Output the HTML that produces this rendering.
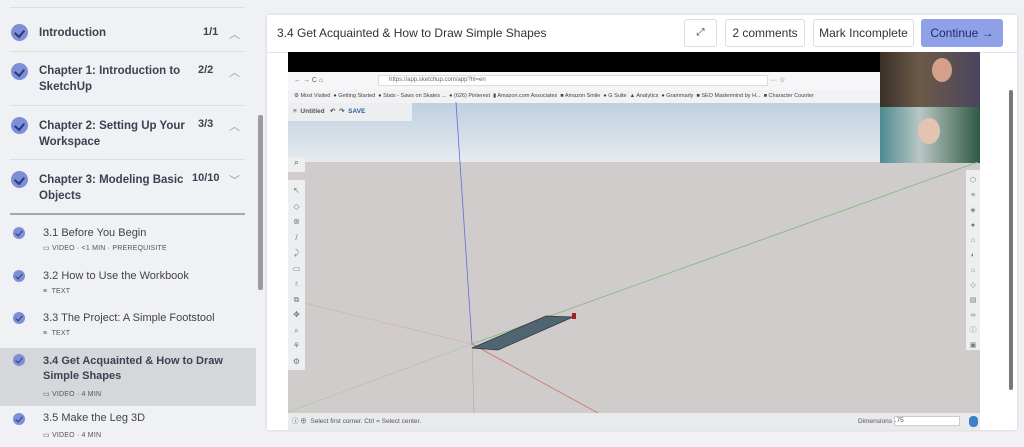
<!DOCTYPE html>
<html><head><meta charset="utf-8"><style>
*{margin:0;padding:0;box-sizing:border-box}
body{width:1024px;height:447px;overflow:hidden;background:#eff1f4;font-family:"Liberation Sans",sans-serif;position:relative;color:#3a3d45}
.abs{position:absolute}
.sec{position:absolute;left:10px;width:235px;border-top:1px solid #dcdee2}
.chk{position:absolute;width:17px;height:17px;border-radius:50%;background:#7e8fd8}
.chk:after{content:"";position:absolute;left:5px;top:4px;width:5px;height:7px;border:solid #2c3a7a;border-width:0 2px 2px 0;transform:rotate(40deg)}
.schk{position:absolute;width:12px;height:12px;border-radius:50%;background:#7e8fd8}
.schk:after{content:"";position:absolute;left:4px;top:2px;width:3px;height:6px;border:solid #2c3a7a;border-width:0 1.5px 1.5px 0;transform:rotate(40deg)}
.st{font-size:11.5px;font-weight:bold;color:#3d4150;line-height:16px;white-space:nowrap}
.cnt{font-size:11px;font-weight:bold;color:#3d4150}
.car{font-size:11px;color:#999}
.lt{font-size:11px;color:#444;line-height:15px}
.meta{font-size:7px;color:#555;letter-spacing:.2px}
.btn{position:absolute;top:19px;height:28px;border:1px solid #dcdde1;border-radius:3px;background:#fff;font-size:12px;color:#333;text-align:center;line-height:26px}
</style></head><body>
<div class="sec" style="top:7px"></div>
<div class="chk" style="left:11px;top:24px"></div><div class="abs st" style="left:39px;top:25px">Introduction</div><div class="abs cnt" style="left:203px;top:26px">1/1</div><div class="abs car" style="left:229px;top:26px">︿</div>
<div class="sec" style="top:51px"></div>
<div class="chk" style="left:11px;top:63px"></div><div class="abs st" style="left:39px;top:63px">Chapter 1: Introduction to<br>SketchUp</div><div class="abs cnt" style="left:198px;top:64px">2/2</div><div class="abs car" style="left:229px;top:64px">︿</div>
<div class="sec" style="top:105px"></div>
<div class="chk" style="left:11px;top:117px"></div><div class="abs st" style="left:39px;top:118px">Chapter 2: Setting Up Your<br>Workspace</div><div class="abs cnt" style="left:198px;top:118px">3/3</div><div class="abs car" style="left:229px;top:118px">︿</div>
<div class="sec" style="top:159px"></div>
<div class="chk" style="left:11px;top:171px"></div><div class="abs st" style="left:39px;top:172px">Chapter 3: Modeling Basic<br>Objects</div><div class="abs cnt" style="left:192px;top:172px">10/10</div><div class="abs car" style="left:229px;top:172px">﹀</div>
<div class="sec" style="top:213px;border-top:2px solid #a5a7ac"></div>
<div class="abs" style="left:258px;top:115px;width:5px;height:175px;background:#9a9ca0;border-radius:2px"></div>
<div class="schk" style="left:13px;top:227px"></div><div class="abs lt" style="left:43px;top:226px">3.1 Before You Begin</div><div class="abs meta" style="left:43px;top:244px">▭ VIDEO · &lt;1 MIN · PREREQUISITE</div>
<div class="schk" style="left:13px;top:270px"></div><div class="abs lt" style="left:43px;top:269px">3.2 How to Use the Workbook</div><div class="abs meta" style="left:43px;top:288px">≡ &nbsp;TEXT</div>
<div class="schk" style="left:13px;top:312px"></div><div class="abs lt" style="left:43px;top:311px">3.3 The Project: A Simple Footstool</div><div class="abs meta" style="left:43px;top:330px">≡ &nbsp;TEXT</div>
<div class="abs" style="left:0;top:348px;width:256px;height:58px;background:#d5d7db"></div>
<div class="schk" style="left:13px;top:354px"></div><div class="abs lt" style="left:43px;top:354px;font-weight:bold;color:#3d4150">3.4 Get Acquainted &amp; How to Draw<br>Simple Shapes</div><div class="abs meta" style="left:43px;top:390px">▭ VIDEO · 4 MIN</div>
<div class="schk" style="left:13px;top:413px"></div><div class="abs lt" style="left:43px;top:411px">3.5 Make the Leg 3D</div><div class="abs meta" style="left:43px;top:431px">▭ VIDEO · 4 MIN</div>
<div class="abs" style="left:267px;top:15px;width:750px;height:415px;background:#fff;box-shadow:0 0 3px rgba(0,0,0,.15)"></div>
<div class="abs" style="left:267px;top:52px;width:750px;height:1px;background:#e3e4e7"></div>
<div class="abs" style="left:277px;top:26px;font-size:12px;color:#333">3.4 Get Acquainted &amp; How to Draw Simple Shapes</div>
<div class="btn" style="left:684px;width:33px;font-size:10px">⤢</div>
<div class="btn" style="left:725px;width:80px">2 comments</div>
<div class="btn" style="left:813px;width:101px">Mark Incomplete</div>
<div class="btn" style="left:921px;width:82px;background:#8ea1e8;border-color:#8ea1e8;color:#1f2c66">Continue →</div>
<div class="abs" style="left:1009px;top:90px;width:4px;height:300px;background:#777;border-radius:2px"></div>
<div class="abs" style="left:288px;top:52px;width:692px;height:20px;background:#000"></div>
<div class="abs" style="left:288px;top:72px;width:592px;height:18px;background:#f6f6f8;font-size:7px;color:#666;line-height:18px;padding-left:6px">← → C ⌂<span style="display:inline-block;margin-left:55px;width:390px;height:11px;background:#fff;border:1px solid #ddd;vertical-align:middle;line-height:9px;padding-left:10px;font-size:6px">https://app.sketchup.com/app?hl=en</span> ··· ☆</div>
<div class="abs" style="left:288px;top:90px;width:592px;height:13px;background:#f2f2f4;font-size:5.5px;color:#444;line-height:13px;padding-left:6px;white-space:nowrap;overflow:hidden">⚙ Most Visited &nbsp;● Getting Started &nbsp;● Stats - Saws on Skates ... &nbsp;● (626) Pinterest &nbsp;▮ Amazon.com Associates &nbsp;■ Amazon Smile &nbsp;● G Suite &nbsp;▲ Analytics &nbsp;● Grammarly &nbsp;■ SEO Mastermind by H... &nbsp;■ Character Counter</div>
<div class="abs" style="left:288px;top:103px;width:692px;height:59px;background:linear-gradient(#bfd0e0,#e6ebef)"></div>
<div class="abs" style="left:288px;top:103px;width:124px;height:18px;background:#eceef0;font-size:6.5px;font-weight:bold;color:#555;line-height:18px;padding-left:5px">≡ &nbsp;Untitled &nbsp; ↶ &nbsp;↷ &nbsp;<span style="color:#2f5fa8">SAVE</span></div>
<div class="abs" style="left:288px;top:162px;width:692px;height:251px;background:#cfcccb"></div>
<div class="abs" style="left:880px;top:52px;width:100px;height:55px;background:linear-gradient(90deg,#3a3028,#6c5a48 40%,#4a4560)"></div>
<div class="abs" style="left:880px;top:107px;width:100px;height:56px;background:linear-gradient(90deg,#4d8c90,#b9c6c4 40%,#2e5a44)"></div>
<div class="abs" style="left:932px;top:58px;width:20px;height:24px;border-radius:50%;background:#d4a08a"></div>
<div class="abs" style="left:918px;top:118px;width:22px;height:26px;border-radius:50%;background:#e2c4b0"></div>
<svg class="abs" style="left:288px;top:52px" width="692" height="378">
<line x1="168" y1="50" x2="184" y2="292" stroke="#5f6fd0" stroke-width="0.8"/>
<line x1="184" y1="292" x2="186" y2="361" stroke="#aaa" stroke-width="0.6"/>
<line x1="184" y1="292" x2="690" y2="110" stroke="#7fb67f" stroke-width="0.8"/>
<line x1="184" y1="292" x2="0" y2="360" stroke="#a7c4a7" stroke-width="0.6"/>
<line x1="184" y1="292" x2="310" y2="361" stroke="#d07060" stroke-width="0.8"/>
<line x1="184" y1="292" x2="4" y2="248" stroke="#d7a8a0" stroke-width="0.6"/>
<polygon points="184,296 258,264 285,265 210,298" fill="#4f6572" stroke="#333" stroke-width="0.7"/>
<rect x="284" y="261" width="4" height="6" fill="#a02020"/>
</svg>
<div class="abs" style="left:288px;top:180px;width:17px;height:190px;background:#eceef0;font-size:8px;color:#777;text-align:center;line-height:15.5px;padding-top:3px">↖<br>◇<br>⊛<br>/<br>⤸<br>▭<br>♁<br>⧉<br>✥<br>⌕<br>⚘<br>⚙</div>
<div class="abs" style="left:288px;top:157px;width:17px;height:15px;background:#eceef0;font-size:9px;color:#555;text-align:center">⌕</div>
<div class="abs" style="left:966px;top:170px;width:14px;height:180px;background:#eceef0;font-size:7px;color:#777;text-align:center;line-height:15px;padding-top:3px">⬡<br>≡<br>◈<br>●<br>⌂<br>◐<br>⌂<br>◇<br>▤<br>∞<br>ⓘ<br>▣</div>
<div class="abs" style="left:288px;top:413px;width:692px;height:17px;background:#e9eaec;font-size:6.5px;color:#555;line-height:17px;padding-left:4px">ⓘ ⊕ &nbsp;Select first corner. Ctrl = Select center.<span style="position:absolute;left:570px">Dimensions <span style="display:inline-block;width:66px;height:10px;background:#fff;border:1px solid #ccc;vertical-align:middle;line-height:8px">.75</span></span><span style="position:absolute;right:2px;top:3px;width:9px;height:11px;border-radius:4px;background:#3f7fc8"></span></div>
</body></html>
